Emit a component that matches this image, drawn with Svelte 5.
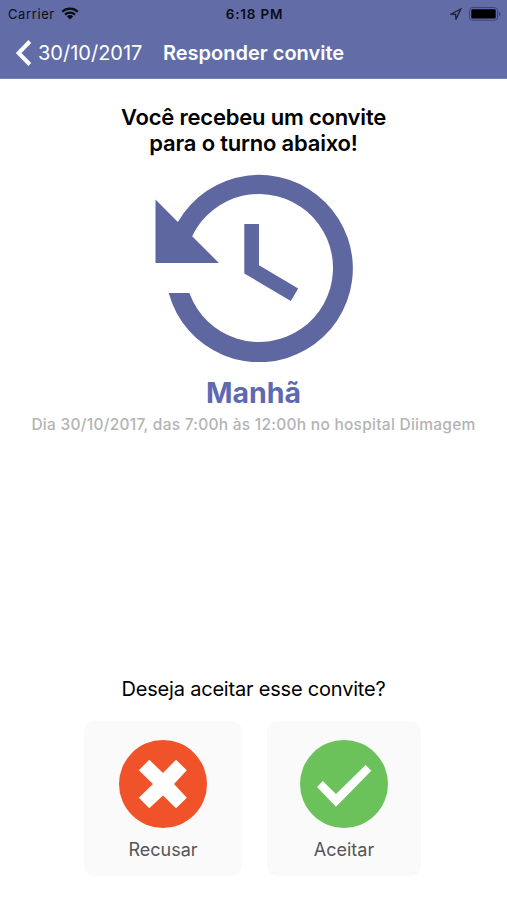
<script lang="ts">
	const shift = {
		name: 'Manhã',
		date: '30/10/2017',
		start: '7:00h',
		end: '12:00h',
		hospital: 'Diimagem'
	};
</script>

<div class="screen">
	<header>
		<div class="status-bar">
			<div class="carrier">
				<span>Carrier</span>
				<svg width="18" height="13" viewBox="0 0 18 13" aria-hidden="true">
					<path d="M1.2 4.7a11.2 11.2 0 0 1 15.6 0M4 7.6a7.1 7.1 0 0 1 10 0" />
					<path class="solid" d="M5.9 9.4a4.4 4.4 0 0 1 6.2 0L9 12.5z" />
				</svg>
			</div>
			<time>6:18 PM</time>
			<div class="indicators">
				<svg width="12" height="12" viewBox="0 0 12 12" aria-hidden="true">
					<path class="location" d="M10.8 1 1 6.2l4.5.2.5 4.6z" />
				</svg>
				<svg width="32" height="14" viewBox="0 0 32 14" aria-hidden="true">
					<rect class="case" x=".6" y=".6" width="28" height="12.6" rx="3" />
					<rect x="2.3" y="2.2" width="24.4" height="9.4" rx="1.4" />
					<path class="tip" d="M30 4.8q1.5.6 1.5 2.2T30 9.2z" />
				</svg>
			</div>
		</div>

		<nav>
			<button class="back" type="button">
				<svg width="18" height="28" viewBox="0 0 18 28" aria-hidden="true">
					<path d="M15.8 2.5 4.6 14l11.2 11.5" />
				</svg>
				<span>{shift.date}</span>
			</button>
			<h1>Responder convite</h1>
		</nav>
	</header>

	<main>
		<p class="intro"><span>Você recebeu um convite</span><br /><span>para o turno abaixo!</span></p>
		<svg class="history" width="198" height="188" viewBox="0 0 198 188" aria-hidden="true">
			<path
				d="M.5 25.5 22.9 47.9A93.7 93.7 0 1 1 13.7 119H34.4A74 74 0 1 0 37.2 62.2L64 89H.5z"
			/>
			<path d="M89.3 50H104v41.2l39.2 23.4-7.4 12.4-46.5-27.6z" />
		</svg>
		<h2>{shift.name}</h2>
		<p class="details">
			Dia {shift.date}, das {shift.start} às {shift.end} no hospital {shift.hospital}
		</p>
	</main>

	<footer>
		<p class="question">Deseja aceitar esse convite?</p>
		<div class="actions">
			<button class="action refuse" type="button">
				<svg width="88" height="88" viewBox="0 0 88 88" aria-hidden="true">
					<circle cx="44" cy="44" r="44" />
					<path
						d="M30.3 19.8 44 33l13-13.2 10.8 10.5L55 44l12.8 13.7L57 68.2 44 55.6 30.3 68.2 19.8 57.7 34 44 19.8 30.3z"
					/>
				</svg>
				<span>Recusar</span>
			</button>
			<button class="action accept" type="button">
				<svg width="88" height="88" viewBox="0 0 88 88" aria-hidden="true">
					<circle cx="44" cy="44" r="44" />
					<path d="m17 47 5.8-6L36 54l29.6-29 5.7 5.7L36 66.7z" />
				</svg>
				<span>Aceitar</span>
			</button>
		</div>
	</footer>
</div>

<style>
	:global(body) {
		margin: 0;
		background: #fff;
	}

	.screen {
		display: flex;
		flex-direction: column;
		height: 900px;
		font-family: Inter, 'Liberation Sans', sans-serif;
		color: #000;
		background: #fff;
	}

	h1,
	h2,
	p {
		margin: 0;
	}

	button {
		padding: 0;
		border: 0;
		background: none;
		font: inherit;
		color: inherit;
	}

	header {
		box-sizing: border-box;
		height: 79px;
		background: #626da8;
		border-bottom: 1px solid #7681b5;
	}

	.status-bar {
		display: grid;
		grid-template-columns: 1fr auto 1fr;
		align-items: center;
		height: 27px;
		padding: 0 6px 0 8px;
		font-size: 13px;
		color: #0b0c14;
	}

	.carrier,
	.indicators {
		display: flex;
		align-items: center;
	}

	.carrier {
		gap: 6px;
		letter-spacing: 0.6px;
	}

	.carrier path {
		fill: none;
		stroke: currentColor;
		stroke-width: 2.2;
	}

	.carrier .solid {
		fill: currentColor;
		stroke: none;
	}

	time {
		font-size: 13.5px;
		font-weight: 600;
		letter-spacing: 0.8px;
	}

	.indicators {
		justify-content: flex-end;
		gap: 7px;
	}

	.location {
		fill: none;
		stroke: #1d2034;
		stroke-width: 1.4;
	}

	.case {
		fill: none;
		stroke: #3c4469;
		stroke-width: 1;
	}

	.tip {
		fill: #3c4469;
	}

	nav {
		display: flex;
		align-items: center;
		height: 51px;
		padding-left: 14px;
		color: #fff;
	}

	.back {
		display: flex;
		align-items: center;
		gap: 6px;
		width: 149px;
		font-size: 20px;
		white-space: nowrap;
	}

	.back path {
		fill: none;
		stroke: #fff;
		stroke-width: 4;
	}

	h1 {
		font-size: 20px;
		font-weight: 600;
		white-space: nowrap;
	}

	main {
		display: flex;
		flex-direction: column;
		align-items: center;
		flex: 1;
		padding-top: 25px;
	}

	.intro {
		font-size: 22px;
		font-weight: 600;
		line-height: 26px;
		letter-spacing: -0.2px;
		text-align: center;
	}

	.history {
		margin-top: 18px;
		fill: #5f67a1;
	}

	h2 {
		margin-top: 13px;
		font-size: 28.5px;
		font-weight: 700;
		line-height: 36px;
		color: #5d69b1;
	}

	.details {
		margin-top: 4px;
		font-size: 15.5px;
		font-weight: 500;
		line-height: 20px;
		letter-spacing: 0.26px;
		color: #b3b3b3;
		white-space: nowrap;
	}

	footer {
		display: flex;
		flex-direction: column;
		align-items: center;
		padding-bottom: 24px;
	}

	.question {
		font-size: 20px;
		line-height: 26px;
		letter-spacing: -0.2px;
	}

	.actions {
		display: flex;
		gap: 25px;
		margin: 19px 2px 0 0;
	}

	.action {
		display: flex;
		flex-direction: column;
		align-items: center;
		box-sizing: border-box;
		width: 158px;
		height: 155px;
		padding-top: 19px;
		border-radius: 10px;
		background: #fafafa;
		font-size: 18px;
		color: #555;
	}

	.accept {
		width: 154px;
	}

	.action span {
		margin-top: 9px;
		line-height: 26px;
	}

	.action path {
		fill: #fff;
	}

	.refuse circle {
		fill: #f05329;
	}

	.accept circle {
		fill: #6bc25a;
	}
</style>
